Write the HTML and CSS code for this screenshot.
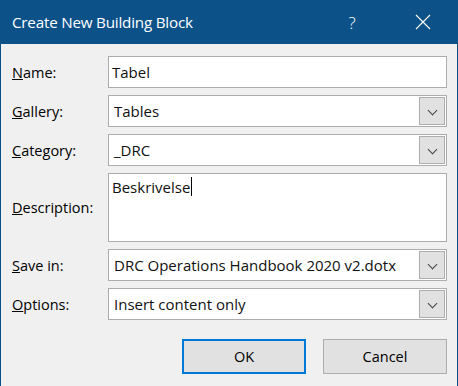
FILE: index.html
```html
<!DOCTYPE html>
<html>
<head>
  <meta charset="utf-8" />
  <title>Create New Building Block</title>
  <link rel="stylesheet" href="styles.css">
</head>
<body>
  <div class="dialog">
    <!-- Titelleiste -->
    <div class="titlebar">
      <span class="title">Create New Building Block</span>
      <span class="help">?</span>
      <span class="close">
        <svg width="16" height="16" viewBox="0 0 16 16"><path d="M1 1 L15 15 M15 1 L1 15" stroke="#fff" stroke-width="1.1" fill="none"/></svg>
      </span>
    </div>

    <div class="content">
      <div class="form">
        <label class="row-name"><u>N</u>ame:</label>
        <div class="field row-name">Tabel</div>

        <label class="row-sel"><u>G</u>allery:</label>
        <div class="field select row-sel"><span>Tables</span><span class="drop"></span></div>

        <label class="row-sel"><u>C</u>ategory:</label>
        <div class="field select row-sel"><span>_DRC</span><span class="drop"></span></div>

        <label class="row-desc"><u>D</u>escription:</label>
        <div class="field area row-desc"><span>Beskrivelse</span><span class="caret"></span></div>

        <label class="row-sel"><u>S</u>ave in:</label>
        <div class="field select row-sel"><span>DRC Operations Handbook 2020 v2.dotx</span><span class="drop"></span></div>

        <label class="row-sel"><u>O</u>ptions:</label>
        <div class="field select row-sel"><span>Insert content only</span><span class="drop"></span></div>
      </div>

      <div class="buttons">
        <button class="btn default">OK</button>
        <button class="btn">Cancel</button>
      </div>
    </div>
  </div>
</body>
</html>
```

FILE: styles.css
```css
/* Grundlayout */
html, body {
  margin: 0;
  padding: 0;
  font-family: "Open Sans", "Noto Sans", sans-serif;
  background: #f0f0f0;
}

.dialog {
  width: 458px;
  height: 386px;
  box-sizing: border-box;
  border-left: 1px solid #0c5289;
  border-right: 1px solid #0c5289;
  background: #f0f0f0;
}

/* Titelleiste */
.titlebar {
  height: 44px;
  margin: 0 -1px;
  background: #0c5289;
  color: #fff;
  display: flex;
  align-items: center;
  padding-left: 12px;
}

.title {
  flex: 1;
  font-size: 15.2px;
  letter-spacing: -0.2px;
}

.help {
  width: 40px;
  text-align: center;
  font-size: 17px;
  font-weight: 300;
  margin-right: 28px;
}

.close {
  width: 46px;
  display: flex;
  justify-content: center;
  margin-right: 12px;
}

.content {
  padding: 12px 10px 0 11px;
}

/* Formular */
.form {
  display: grid;
  grid-template-columns: 96px 1fr;
  row-gap: 7px;
}

label {
  display: flex;
  align-items: center;
  font-size: 14.5px;
  color: #000;
}

.field {
  border: 1px solid #adadad;
  background: #fff;
  box-sizing: border-box;
  font-size: 15px;
  color: #111;
  display: flex;
  align-items: center;
  padding-left: 3px;
}

.row-name { height: 32px; }
.row-sel { height: 32px; }
.row-desc { height: 69px; }

.select {
  justify-content: space-between;
  padding: 0 1px 0 5px;
}

/* Dropdown-Knopf */
.drop {
  width: 26px;
  height: 28px;
  box-sizing: border-box;
  border: 1px solid #adadad;
  background: #e1e1e1;
  position: relative;
}

.drop::after {
  content: "";
  position: absolute;
  left: 9px;
  top: 9px;
  width: 6px;
  height: 6px;
  border-right: 1px solid #444;
  border-bottom: 1px solid #444;
  transform: rotate(45deg);
}

.area {
  align-items: flex-start;
  padding-top: 3px;
}

.caret {
  display: inline-block;
  width: 1px;
  height: 19px;
  background: #000;
  margin-left: 1px;
}

/* Knöpfe */
.buttons {
  display: flex;
  justify-content: flex-end;
  gap: 17px;
  margin-top: 19px;
}

.btn {
  width: 124px;
  height: 35px;
  box-sizing: border-box;
  border: 1px solid #adadad;
  background: #e1e1e1;
  font-family: "Open Sans", "Noto Sans", sans-serif;
  font-size: 14.5px;
  color: #000;
  padding: 0;
}

.btn.default {
  border: 2px solid #0078d7;
}
```
